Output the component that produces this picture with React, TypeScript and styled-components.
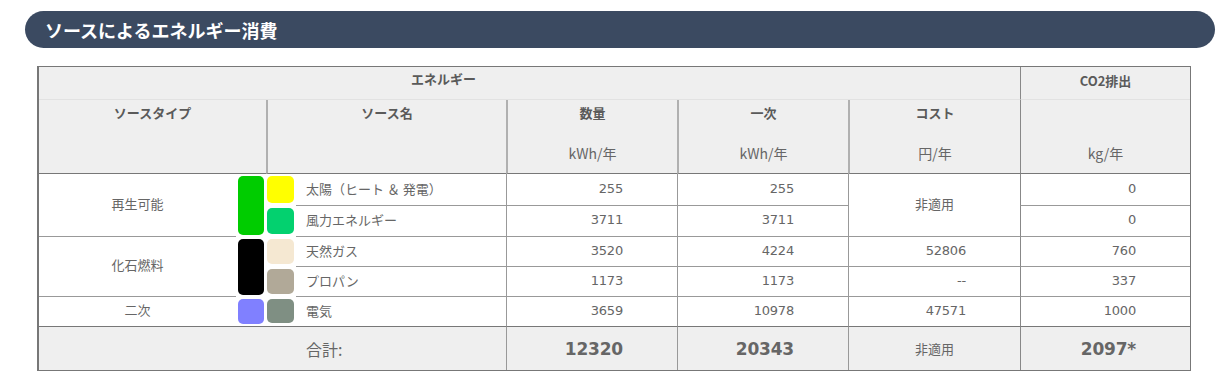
import React from "react";
import styled, { createGlobalStyle, css } from "styled-components";

const Global = createGlobalStyle`
  html, body { margin: 0; padding: 0; background: #ffffff; }
  body { font-family: "Noto Sans CJK JP", "Noto Sans", sans-serif; }
  * { box-sizing: border-box; }
`;

const Page = styled.div`
  padding: 11px 0 0 25px;
  width: 1215px;
`;

const TitleBar = styled.h2`
  margin: 0;
  width: 1190px;
  height: 37px;
  border-radius: 19px;
  background: #3b4a61;
  color: #ffffff;
  font-size: 18px;
  font-weight: 700;
  display: flex;
  align-items: center;
  padding-left: 20px;
  letter-spacing: 0;
`;

const Table = styled.div`
  margin: 18px 0 0 12px;
  width: 1154px;
  display: grid;
  grid-template-columns: 197px 30px 30px 210px 171px 171px 172px 170px;
  grid-template-rows: 33px 74px 32px 31px 30px 30px 29px 44px;
  border: 1px solid #777777;
  border-left-width: 2px;
  color: #666666;
  font-size: 13px;
  line-height: 20px;
`;

type Place = { $col: string; $row: string };

const placed = css<Place>`
  grid-column: ${(p) => p.$col};
  grid-row: ${(p) => p.$row};
`;

const numberFont = css`
  font-family: "DejaVu Sans", "Noto Sans CJK JP", sans-serif;
  letter-spacing: -0.2px;
`;

const GroupHead = styled.div<Place & { $divider?: boolean }>`
  ${placed};
  background: #efefef;
  border-bottom: 1px solid #e2e2e2;
  font-weight: 700;
  font-size: 13px;
  color: #5a5a5a;
  text-align: center;
  padding-top: ${(p) => (p.$divider ? "4px" : "2px")};
  ${(p) => p.$divider && "border-left: 1px solid #888888;"}
`;

const ColHead = styled.div<Place & { $divider?: "light" | "dark" }>`
  ${placed};
  background: #efefef;
  border-bottom: 1px solid #777777;
  display: flex;
  flex-direction: column;
  justify-content: space-between;
  align-items: center;
  padding: 3px 0 10px;
  border-left: ${(p) =>
    p.$divider === "light"
      ? "2px solid #b0b0b0"
      : p.$divider === "dark"
      ? "1px solid #888888"
      : "none"};
`;

const HeadLabel = styled.span`
  font-weight: 700;
  color: #5a5a5a;
  min-height: 20px;
`;

const HeadUnit = styled.span`
  color: #666666;
  font-size: 14px;
`;

const lineBelow = css<{ $last?: boolean }>`
  border-bottom: ${(p) => (p.$last ? "none" : "1px solid #999999")};
`;

const TypeCell = styled.div<Place & { $last?: boolean }>`
  ${placed};
  ${lineBelow};
  display: flex;
  align-items: center;
  justify-content: center;
  padding-bottom: 3px;
`;

const ChipCell = styled.div<Place & { $side: "big" | "small" }>`
  ${placed};
  display: flex;
  padding: ${(p) => (p.$side === "big" ? "2px 2px 2px 2px" : "2px 2px 3px 1px")};
`;

const Chip = styled.div<{ $color: string }>`
  flex: 1;
  border-radius: 5px;
  background: ${(p) => p.$color};
`;

const NameCell = styled.div<Place & { $last?: boolean }>`
  ${placed};
  ${lineBelow};
  display: flex;
  align-items: center;
  padding: 0 0 2px 10px;
`;

const NumCell = styled.div<Place & { $last?: boolean; $dark?: boolean }>`
  ${placed};
  ${lineBelow};
  ${numberFont};
  display: flex;
  align-items: center;
  justify-content: flex-end;
  padding: 0 54px 2px 0;
  border-left: 1px solid ${(p) => (p.$dark ? "#888888" : "#999999")};
`;

const NaCell = styled.div<Place & { $last?: boolean }>`
  ${placed};
  ${lineBelow};
  display: flex;
  align-items: center;
  justify-content: center;
  border-left: 1px solid #999999;
  padding-bottom: 3px;
`;

const TotalBase = css`
  background: #efefef;
  border-top: 1px solid #777777;
  display: flex;
  align-items: center;
`;

const TotalBlank = styled.div<Place>`
  ${placed};
  ${TotalBase};
`;

const TotalLabel = styled.div<Place>`
  ${placed};
  ${TotalBase};
  padding-left: 10px;
  font-size: 16px;
`;

const TotalNum = styled.div<Place & { $dark?: boolean }>`
  ${placed};
  ${TotalBase};
  ${numberFont};
  justify-content: flex-end;
  padding-right: 54px;
  font-size: 17px;
  font-weight: 700;
  border-left: 1px solid ${(p) => (p.$dark ? "#888888" : "#999999")};
`;

const TotalNa = styled.div<Place>`
  ${placed};
  ${TotalBase};
  justify-content: center;
  border-left: 1px solid #999999;
`;

type Source = {
  name: string;
  chip: string;
  qty: string;
  prim: string;
  cost?: string;
  co2: string;
};

type Group = { type: string; big: string; rows: Source[]; costNa?: boolean };

const groups: Group[] = [
  {
    type: "再生可能",
    big: "#00cc00",
    costNa: true,
    rows: [
      { name: "太陽（ヒート ＆ 発電）", chip: "#ffff00", qty: "255", prim: "255", co2: "0" },
      { name: "風力エネルギー", chip: "#03d16f", qty: "3711", prim: "3711", co2: "0" },
    ],
  },
  {
    type: "化石燃料",
    big: "#000000",
    rows: [
      { name: "天然ガス", chip: "#f5e8d2", qty: "3520", prim: "4224", cost: "52806", co2: "760" },
      { name: "プロパン", chip: "#b1a998", qty: "1173", prim: "1173", cost: "--", co2: "337" },
    ],
  },
  {
    type: "二次",
    big: "#8080ff",
    rows: [
      { name: "電気", chip: "#7f8f83", qty: "3659", prim: "10978", cost: "47571", co2: "1000" },
    ],
  },
];

export default function App() {
  const cells: React.ReactNode[] = [];
  let row = 3;
  const lastRow = 7;
  groups.forEach((g, gi) => {
    const start = row;
    const end = row + g.rows.length;
    const groupLast = end - 1 === lastRow;
    cells.push(
      <TypeCell key={`t${gi}`} $col="1" $row={`${start} / ${end}`} $last={groupLast}>
        {g.type}
      </TypeCell>,
      <ChipCell key={`b${gi}`} $col="2" $row={`${start} / ${end}`} $side="big">
        <Chip $color={g.big} />
      </ChipCell>
    );
    if (g.costNa) {
      cells.push(
        <NaCell key={`na${gi}`} $col="7" $row={`${start} / ${end}`} $last={groupLast}>
          非適用
        </NaCell>
      );
    }
    g.rows.forEach((s, si) => {
      const r = row + si;
      const last = r === lastRow;
      const k = `${gi}-${si}`;
      cells.push(
        <ChipCell key={`c${k}`} $col="3" $row={`${r}`} $side="small">
          <Chip $color={s.chip} />
        </ChipCell>,
        <NameCell key={`n${k}`} $col="4" $row={`${r}`} $last={last}>
          {s.name}
        </NameCell>,
        <NumCell key={`q${k}`} $col="5" $row={`${r}`} $last={last}>
          {s.qty}
        </NumCell>,
        <NumCell key={`p${k}`} $col="6" $row={`${r}`} $last={last}>
          {s.prim}
        </NumCell>
      );
      if (!g.costNa) {
        cells.push(
          <NumCell key={`k${k}`} $col="7" $row={`${r}`} $last={last}>
            {s.cost}
          </NumCell>
        );
      }
      cells.push(
        <NumCell key={`e${k}`} $col="8" $row={`${r}`} $last={last} $dark>
          {s.co2}
        </NumCell>
      );
    });
    row = end;
  });

  return (
    <>
      <Global />
      <Page>
        <TitleBar>ソースによるエネルギー消費</TitleBar>
        <Table>
          <GroupHead $col="1 / 7" $row="1">エネルギー</GroupHead>
          <GroupHead $col="7" $row="1" />
          <GroupHead $col="8" $row="1" $divider>
            CO2排出
          </GroupHead>

          <ColHead $col="1 / 3" $row="2">
            <HeadLabel>ソースタイプ</HeadLabel>
            <HeadUnit />
          </ColHead>
          <ColHead $col="3 / 5" $row="2" $divider="light">
            <HeadLabel>ソース名</HeadLabel>
            <HeadUnit />
          </ColHead>
          <ColHead $col="5" $row="2" $divider="light">
            <HeadLabel>数量</HeadLabel>
            <HeadUnit>kWh/年</HeadUnit>
          </ColHead>
          <ColHead $col="6" $row="2" $divider="light">
            <HeadLabel>一次</HeadLabel>
            <HeadUnit>kWh/年</HeadUnit>
          </ColHead>
          <ColHead $col="7" $row="2" $divider="light">
            <HeadLabel>コスト</HeadLabel>
            <HeadUnit>円/年</HeadUnit>
          </ColHead>
          <ColHead $col="8" $row="2" $divider="dark">
            <HeadLabel />
            <HeadUnit>kg/年</HeadUnit>
          </ColHead>

          {cells}

          <TotalBlank $col="1 / 4" $row="8" />
          <TotalLabel $col="4" $row="8">合計:</TotalLabel>
          <TotalNum $col="5" $row="8">12320</TotalNum>
          <TotalNum $col="6" $row="8">20343</TotalNum>
          <TotalNa $col="7" $row="8">非適用</TotalNa>
          <TotalNum $col="8" $row="8" $dark>
            2097*
          </TotalNum>
        </Table>
      </Page>
    </>
  );
}
